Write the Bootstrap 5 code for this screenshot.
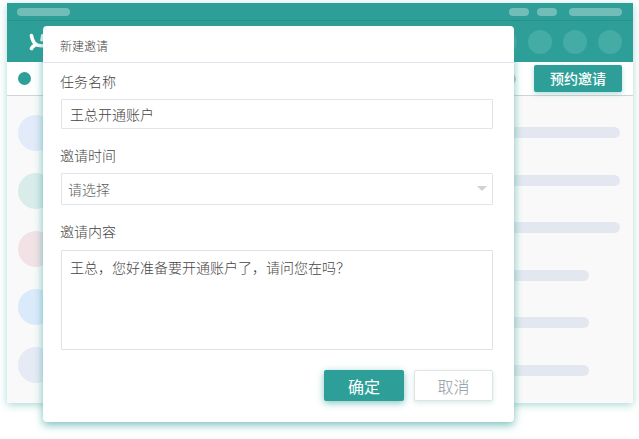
<!doctype html>
<html lang="zh">
<head>
<meta charset="utf-8">
<title>新建邀请</title>
<link href="https://cdn.jsdelivr.net/npm/bootstrap@5.3.0/dist/css/bootstrap.min.css" rel="stylesheet">
<style>
html,body{height:100%;overflow:hidden;background:#fff}
body{font-family:"Noto Sans CJK SC","Liberation Sans",sans-serif;font-weight:300;color:#444}
.stage{position:relative;width:639px;height:439px;padding:3px 6px 0 7px}
.appwin{height:400px;background:#f9f9f9;box-shadow:0 2px 8px rgba(46,159,152,.4)}
.topstrip{height:18px;background:#2e9f98;padding:0 11px 0 10px;border-bottom:1px solid #2a9189}
.pill{height:8px;border-radius:4px;background:#72bdb8;display:block}
.p53{width:53px}.p20{width:20px}.gap-top{gap:8px}.p53b{width:53px;margin-left:4px}
.headbar{height:41px;background:#2e9f98;padding:0 11px 0 22px}
.hgroup{gap:11px}
.hcircle{width:24px;height:24px;border-radius:50%;background:#45aba5;display:block}
.subbar{height:34px;background:#fff;border-bottom:1px solid #cfd3d6;padding:0 11px}
.dot{width:13px;height:13px;border-radius:50%;background:#2e9f98;display:block}
.greydot{width:12px;height:12px;border-radius:50%;background:#c5c9cc;display:block;margin-right:18px}
.invite{width:88px;height:27px;padding:0;background:#2e9f98;border:0;border-radius:2px;color:#fff;font-size:14px;font-weight:500;box-shadow:0 2px 5px rgba(46,159,152,.35);margin-top:-1px}
.content{padding:19px 13px 0 11px}
.avcol{gap:22px}
.avatar{width:36px;height:36px;border-radius:50%;display:block}
.a1{background:#e3eaf9}.a2{background:#d9ece9}.a3{background:#f2e1e5}.a4{background:#dbeafa}.a5{background:#e6eaf5}
.barcol{padding-top:12px;gap:36.6px}
.skel{height:11px;border-radius:6px;background:#e3e8f0;display:block}
.w1{width:320px}.w2{width:289px}
.dialog{position:absolute;left:43px;top:26px;width:471px;height:396px;background:#fff;border-radius:4px;box-shadow:0 3px 9px rgba(46,159,152,.65)}
.dlghead{height:37px;padding:3px 17px 0;font-size:12px;border-bottom:1px solid #e4e4ee;color:#444}
.dlgbody{padding:8px 21px 0 17px}
.flabel{font-size:14px;line-height:20px;margin:0 0 8px;color:#444;display:block}
.ctl{border:1px solid #e2e3ea;border-radius:1px;font-size:14px;color:#444;font-weight:300;margin-left:1px;width:432px;box-shadow:none}
.ctl-in{height:30px;padding:0 8px;margin-bottom:16px}
.ctl-sel{height:32px;padding:0 6px;margin-bottom:16px;color:#5c5c5c;background-image:none}
.selwrap{position:relative}
.caret-d{position:absolute;right:6px;top:13px;width:0;height:0;border-left:5px solid transparent;border-right:5px solid transparent;border-top:5px solid #d2d2d2;display:block}
.lbl3{margin-bottom:9px}
.ctl-ta{height:100px;padding:6px 8px;resize:none;line-height:20px;border-color:#e2e2e2;margin-bottom:20px}
.ok{width:80px;height:31px;padding:0;background:#2e9f98;border:0;border-radius:2px;color:#fff;font-size:16px;font-weight:400;box-shadow:0 2px 7px rgba(46,159,152,.6)}
.cancel{width:79px;height:31px;padding:0;background:#fff;border:1px solid #e2e2e2;border-radius:2px;color:#8e97a3;font-size:16px;font-weight:300;box-shadow:0 2px 5px rgba(46,159,152,.2)}
.btnrow{gap:10px}
</style>
</head>
<body>
<div class="stage">
  <div class="appwin d-flex flex-column">
    <div class="topstrip d-flex align-items-center">
      <span class="pill p53"></span>
      <span class="ms-auto d-flex align-items-center gap-top">
        <span class="pill p20"></span><span class="pill p20"></span><span class="pill p53b"></span>
      </span>
    </div>
    <div class="headbar d-flex align-items-center">
      <svg width="15" height="18" viewBox="0 0 15 18" class="d-block"><path d="M2.500 2.500C3 6 4 9 7 11.500C5.500 12.500 3.500 13 2.500 15.500M7 11.500C9.500 12.800 12 13 15 12.500" fill="none" stroke="#fff" stroke-width="3.600" stroke-linecap="round"/><path d="M13.500 2.500L12.800 7" fill="none" stroke="#fff" stroke-width="3" stroke-linecap="round"/></svg>
      <span class="ms-auto d-flex hgroup">
        <span class="hcircle"></span><span class="hcircle"></span><span class="hcircle"></span><span class="hcircle"></span>
      </span>
    </div>
    <div class="subbar d-flex align-items-center">
      <span class="dot"></span>
      <span class="ms-auto greydot"></span>
      <button type="button" class="btn invite">预约邀请</button>
    </div>
    <div class="content d-flex justify-content-between flex-grow-1">
      <div class="d-flex flex-column avcol">
        <span class="avatar a1"></span><span class="avatar a2"></span><span class="avatar a3"></span><span class="avatar a4"></span><span class="avatar a5"></span>
      </div>
      <div class="d-flex flex-column align-items-start barcol">
        <span class="skel w1"></span><span class="skel w1"></span><span class="skel w1"></span><span class="skel w2"></span><span class="skel w2"></span><span class="skel w2"></span>
      </div>
    </div>
  </div>
  <div class="dialog">
    <div class="dlghead d-flex align-items-center">新建邀请</div>
    <form class="dlgbody">
      <label class="flabel">任务名称</label>
      <input class="form-control ctl ctl-in" type="text" value="王总开通账户">
      <label class="flabel">邀请时间</label>
      <div class="selwrap">
        <select class="form-select ctl ctl-sel"><option>请选择</option></select>
        <span class="caret-d"></span>
      </div>
      <label class="flabel lbl3">邀请内容</label>
      <textarea class="form-control ctl ctl-ta">王总，您好准备要开通账户了，请问您在吗？</textarea>
      <div class="d-flex justify-content-end btnrow">
        <button type="button" class="btn ok">确定</button>
        <button type="button" class="btn cancel">取消</button>
      </div>
    </form>
  </div>
</div>
</body>
</html>
